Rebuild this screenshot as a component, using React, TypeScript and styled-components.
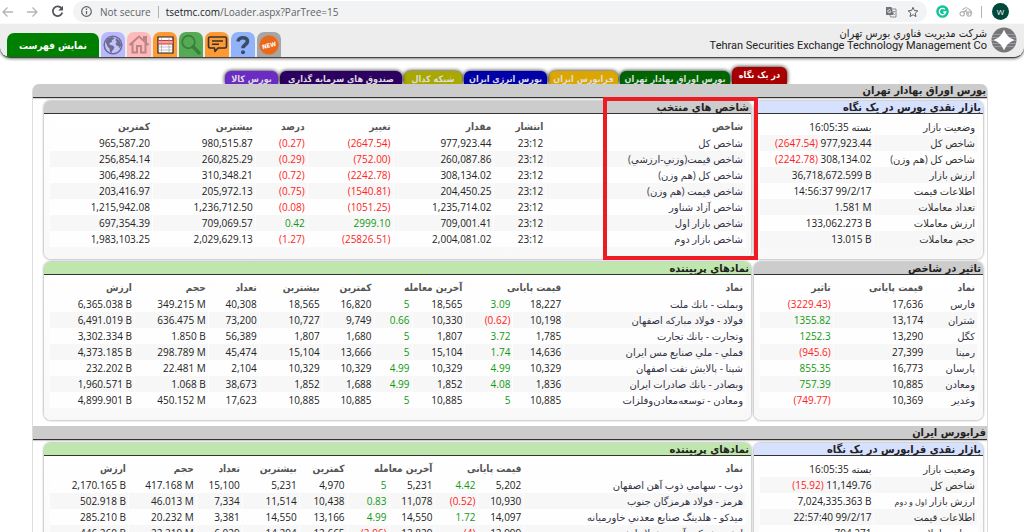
import React from "react";
import styled, { createGlobalStyle, css } from "styled-components";

const headingFont = `"DejaVu Sans Condensed", "DejaVu Sans", sans-serif`;
const textFont = `"Open Sans", "DejaVu Sans", sans-serif`;

const GlobalStyle = createGlobalStyle`
  *, *::before, *::after { box-sizing: border-box; }
  body {
    margin: 0;
    background: #fff;
    color: #222;
    font-family: ${headingFont};
    font-size: 10px;
  }
`;

const Window = styled.div`
  display: flex;
  flex-direction: column;
  height: 100vh;
  overflow: hidden;
`;

/* ---------- browser bar ---------- */

const BrowserBar = styled.div`
  display: flex;
  flex: none;
  align-items: center;
  gap: 8px;
  height: 25px;
  padding: 0 15px 2px 0;
  background: #fff;
  font-family: "Open Sans", "Noto Sans", sans-serif;
  font-size: 10px;
`;

const NavButtons = styled.div`
  display: flex;
  gap: 10px;
  width: 65px;
`;

const IconButton = styled.button`
  display: flex;
  align-items: center;
  justify-content: center;
  flex: none;
  width: 15px;
  height: 16px;
  padding: 0;
  border: 0;
  background: none;
  color: #5f6368;
`;

const Address = styled.div`
  display: flex;
  flex: 1;
  align-items: center;
  gap: 7px;
  height: 21px;
  padding: 0 7px;
  border-radius: 11px;
  background: #f1f3f4;
`;

const Insecure = styled.span`
  color: #5f6368;
`;

const Divider = styled.span`
  flex: none;
  width: 1px;
  height: 12px;
  background: #b0b3b6;
`;

const Url = styled.span`
  flex: 1;
  color: #5f6368;
  b { color: #202124; font-weight: 400; }
`;

const Avatar = styled.button`
  flex: none;
  width: 17px;
  height: 17px;
  margin-left: 2px;
  padding: 0;
  border: 0;
  border-radius: 50%;
  background: #00483c;
  color: #fff;
  font-family: inherit;
  font-size: 8px;
  line-height: 17px;
`;

/* ---------- site header ---------- */

const SiteHeader = styled.header`
  display: flex;
  flex: none;
  align-items: flex-end;
  height: 33px;
  padding: 0 7px;
  border-bottom: 1px solid #444;
  border-radius: 0 0 10px 10px;
  background: #ededed;
  box-shadow: 0 1px 3px rgba(0, 0, 0, 0.5);
`;

const MenuButton = styled.button`
  width: 92px;
  height: 24px;
  padding: 0;
  border: 0;
  border-radius: 7px 7px 0 0;
  background: #008000;
  color: #fff;
  font-family: inherit;
  font-size: 10px;
  font-weight: 700;
`;

const Shortcuts = styled.nav`
  display: flex;
  gap: 2px;
  padding-left: 2px;
`;

const Shortcut = styled.a<{ $color: string }>`
  display: flex;
  align-items: center;
  justify-content: center;
  width: 24px;
  height: 25px;
  border-radius: 7px 7px 0 0;
  background: ${(p) => p.$color};
`;

const Brand = styled.div`
  display: flex;
  flex: 1;
  align-items: center;
  justify-content: flex-end;
  gap: 4px;
  height: 100%;
  padding-bottom: 3px;
`;

const BrandText = styled.div`
  text-align: right;
  font-size: 11px;
  line-height: 12px;
  color: #222;
`;

const BrandLatin = styled.div`
  font-family: Roboto, sans-serif;
`;

/* ---------- section tabs ---------- */

const Tabs = styled.nav`
  display: flex;
  flex: none;
  direction: rtl;
  align-items: flex-end;
  gap: 2px;
  height: 26px;
  padding-right: 237px;
  overflow: hidden;
`;

const Tab = styled.a<{ $color: string; $width: number; $active?: boolean }>`
  flex: none;
  width: ${(p) => p.$width}px;
  height: 13px;
  overflow: hidden;
  border-radius: 6px 6px 0 0;
  background: ${(p) => p.$color};
  box-shadow: 0 0 4px #000;
  color: #ddd;
  font-size: 9px;
  font-weight: 700;
  line-height: 16px;
  text-align: center;
  text-decoration: none;
  white-space: nowrap;
  ${(p) =>
    p.$active &&
    css`
      height: 17px;
      color: #fff;
    `}
`;

/* ---------- panels ---------- */

const Board = styled.main`
  direction: rtl;
  flex: none;
  margin: 0 36px 0 32px;
  border: solid #ddd;
  border-width: 0 1px;
  border-radius: 7px 7px 0 0;
`;

const BoardTitle = styled.h1`
  height: 14px;
  margin: 0;
  padding: 0 1px;
  border-bottom: 1px solid #333;
  background: #ccc;
  box-shadow: 0 1px 1px #ccc;
  font-size: 11px;
  line-height: 14px;
  &:first-child { border-radius: 6px 6px 0 0; }
`;

const Grid = styled.div`
  display: grid;
  grid-template-columns: minmax(0, 229fr) minmax(0, 707fr);
  gap: 3px;
  padding: 3px 4px 6px 11px;
`;

const Panel = styled.section`
  position: relative;
  display: flex;
  flex-direction: column;
  border-radius: 7px;
  background: #fff;
  box-shadow: 0 0 2px 1px #c4c4c4;
`;

const PanelTitle = styled.h2<{ $color: string }>`
  height: 13px;
  margin: 0;
  padding: 0 2px;
  border-bottom: 1px solid #333;
  border-radius: 6px 6px 0 0;
  background: ${(p) => p.$color};
  font-size: 11px;
  line-height: 14px;
`;

const PanelBody = styled.div`
  flex: 1;
  padding: 5px 5px 12px;
  border-radius: 0 0 7px 7px;
  background: linear-gradient(#fff, #f8f8f8);
`;

const Highlight = styled.div`
  position: absolute;
  z-index: 1;
  top: -4px;
  right: -7px;
  bottom: -1px;
  width: 155px;
  border: 4px solid #ed1c24;
  pointer-events: none;
`;

const Table = styled.table`
  width: 100%;
  table-layout: fixed;
  border-collapse: collapse;
  line-height: 14px;
  white-space: nowrap;
  td, th {
    height: 16px;
    padding: 0 2px;
    border: solid #fdfdfd;
    border-width: 0 1px;
    text-align: right;
  }
  thead th { color: #555; }
  tbody { font-family: ${textFont}; }
  tbody th { font-weight: 400; color: #333; }
  tbody td { direction: ltr; }
  tbody tr { background: #fefefe; }
  tbody tr:nth-child(even) { background: #f7f7f7; }
`;

const Column = styled.col<{ $share: number }>`
  width: ${(p) => p.$share}%;
`;

const Amount = styled.span<{ $down?: boolean }>`
  color: ${(p) => (p.$down ? "#f22" : "#191")};
`;

const SymbolLink = styled.a`
  color: #334;
  text-decoration: none;
`;

const Small = styled.small`
  font-size: 8px;
`;

/* ---------- data ---------- */

type Heading = { text: string; span?: number };

const indexHeads: Heading[] = ["شاخص", "انتشار", "مقدار", "تغییر", "درصد", "بیشترین", "کمترین"].map((text) => ({ text }));
const indexRows = [
  ["شاخص کل", "23:12", "977,923.44", "(2647.54)", "(0.27)", "980,515.87", "965,587.20"],
  ["شاخص قيمت(وزني-ارزشي)", "23:12", "260,087.86", "(752.00)", "(0.29)", "260,825.29", "256,854.14"],
  ["شاخص کل (هم وزن)", "23:12", "308,134.02", "(2242.78)", "(0.72)", "310,348.21", "306,498.22"],
  ["شاخص قیمت (هم وزن)", "23:12", "204,450.25", "(1540.81)", "(0.75)", "205,972.13", "203,416.97"],
  ["شاخص آزاد شناور", "23:12", "1,235,714.02", "(1051.25)", "(0.08)", "1,236,712.50", "1,215,942.08"],
  ["شاخص بازار اول", "23:12", "709,001.41", "2999.10", "0.42", "709,069.57", "697,354.39"],
  ["شاخص بازار دوم", "23:12", "2,004,081.02", "(25826.51)", "(1.27)", "2,029,629.13", "1,983,103.25"],
];

const impactHeads: Heading[] = ["نماد", "قیمت پایانی", "تاثیر"].map((text) => ({ text }));
const impactRows = [
  ["فارس", "17,636", "(3229.43)"],
  ["شتران", "13,174", "1355.82"],
  ["کگل", "13,290", "1252.3"],
  ["رمپنا", "27,399", "(945.6)"],
  ["پارسان", "16,773", "855.35"],
  ["ومعادن", "10,885", "757.39"],
  ["وغدير", "10,369", "(749.77)"],
];

const symbolHeads: Heading[] = [
  { text: "نماد" },
  { text: "قیمت پایانی", span: 2 },
  { text: "آخرین معامله", span: 2 },
  { text: "کمترین" },
  { text: "بیشترین" },
  { text: "تعداد" },
  { text: "حجم" },
  { text: "ارزش" },
];
const bourseRows = [
  ["وبملت - بانك ملت", "18,227", "3.09", "18,565", "5", "16,820", "18,565", "40,308", "349.215 M", "6,365.038 B"],
  ["فولاد - فولاد مباركه اصفهان", "10,198", "(0.62)", "10,330", "0.66", "9,749", "10,727", "73,200", "636.475 M", "6,491.019 B"],
  ["وتجارت - بانك تجارت", "1,785", "3.72", "1,807", "5", "1,680", "1,807", "56,389", "1.850 B", "3,302.334 B"],
  ["فملي - ملي صنايع مس ايران", "14,636", "1.74", "15,104", "5", "13,666", "15,104", "45,474", "298.789 M", "4,373.185 B"],
  ["شپنا - پالايش نفت اصفهان", "10,329", "4.99", "10,329", "4.99", "10,329", "10,329", "2,104", "22.481 M", "232.202 B"],
  ["وبصادر - بانك صادرات ايران", "1,836", "4.08", "1,852", "4.99", "1,688", "1,852", "38,673", "1.068 B", "1,960.571 B"],
  ["ومعادن - توسعه‌معادن‌وفلزات", "10,885", "5", "10,885", "5", "10,885", "10,885", "17,623", "450.152 M", "4,899.901 B"],
];
const otcRows = [
  ["ذوب - سهامي ذوب آهن اصفهان", "5,202", "4.42", "5,231", "5", "4,970", "5,231", "15,100", "417.168 M", "2,170.165 B"],
  ["هرمز - فولاد هرمزگان جنوب", "10,930", "(0.52)", "11,078", "0.83", "10,438", "11,514", "7,334", "46.013 M", "502.918 B"],
  ["ميدكو - هلدينگ صنايع معدني خاورميانه", "14,097", "1.72", "14,550", "4.99", "13,166", "14,550", "3,381", "20.232 M", "285.210 B"],
  ["ارفع - شركت آهن و فولاد ارفع", "12,999", "(4)", "12,829", "(2.96)", "12,665", "14,294", "6,029", "22.219 M", "446.260 B"],
];

const tabs = [
  { text: "در یک نگاه", color: "#a80000", width: 55, active: true },
  { text: "بورس اوراق بهادار تهران", color: "#006400", width: 110 },
  { text: "فرابورس ایران", color: "#dca600", width: 69 },
  { text: "بورس انرژی ایران", color: "#0000a8", width: 83 },
  { text: "شبکه کدال", color: "#a8a800", width: 58 },
  { text: "صندوق های سرمایه گذاری", color: "#2c0060", width: 122 },
  { text: "بورس کالا", color: "#6a2cc4", width: 53 },
];

/* ---------- icons ---------- */

const GlobeIcon = () => (
  <svg width="20" height="20" viewBox="0 0 20 20">
    <circle cx="10" cy="10" r="8.8" fill="#c4c4fa" stroke="#6c6c94" strokeWidth="1.500" />
    <path d="M2.500 6.500 5 3.500 9 2 11.500 3 10.500 4.500 8.500 5 9.500 6.500 7.500 7.500 6 9 7.500 10 9.500 10.500 11.500 12 10.500 14.500 9 16 8.500 18 7 17 6.500 13.500 4.500 11.500 3.500 9ZM13 3 16.500 5.500 18.200 9 17.500 12 16 13 15.500 11 13.500 10.500 12.500 8.500 14 7 12.500 5.500Z" fill="#6c6c94" />
  </svg>
);
const HomeIcon = () => (
  <svg width="22" height="21" viewBox="0 0 22 21">
    <path d="M1.500 11 11 2.500 20.500 11M4.500 9V18.500H9V12H13V18.500H17.500V9M16 6V3H18V8" fill="none" stroke="#b98585" strokeWidth="2" />
  </svg>
);
const SheetIcon = () => (
  <svg width="17" height="18" viewBox="0 0 17 18">
    <path d="M1 1H16V17H1Z" fill="#fff" stroke="#222" strokeWidth="1.200" />
    <path d="M1.600 4.500H15.400V8H1.600Z" fill="#f3a4a0" />
    <path d="M1 4.500H16M1 8H16" stroke="#d33" />
    <path d="M1 11H16M1 14H16M4.500 1V17M12 1V17" stroke="#999" strokeWidth=".6" />
  </svg>
);
const SearchIcon = () => (
  <svg width="22" height="22" viewBox="0 0 22 22">
    <circle cx="8.500" cy="8" r="6.300" fill="#55aa55" stroke="#3a803a" strokeWidth="1.700" />
    <path d="M13 12.500 19 19" stroke="#3a803a" strokeWidth="3.500" strokeLinecap="round" />
  </svg>
);
const ChatIcon = () => (
  <svg width="21" height="19" viewBox="0 0 21 19">
    <path d="M3 2H18Q19.500 2 19.500 3.500V11.500Q19.500 13 18 13H11L8 16.500 7.500 13H3Q1.500 13 1.500 11.500V3.500Q1.500 2 3 2Z" fill="none" stroke="#333" strokeWidth="1.600" strokeLinejoin="round" />
    <path d="M5 6H16M5 9.200H12" stroke="#333" strokeWidth="1.500" />
  </svg>
);
const HelpIcon = () => (
  <svg width="16" height="20" viewBox="0 0 16 20">
    <path d="M3.200 6.500C3.200 1.500 12.500 1.500 12.500 6.300 12.500 9.500 8 9.500 8 13.300" fill="none" stroke="#3c4a66" strokeWidth="3.600" />
    <circle cx="8" cy="17.200" r="2" fill="#3c4a66" />
  </svg>
);
const NewIcon = () => (
  <svg width="22" height="22" viewBox="0 0 22 22">
    <circle cx="11" cy="11" r="9.500" fill="#e8691b" stroke="#f4762a" strokeDasharray="1.500 1" />
    <text x="11" y="13.500" textAnchor="middle" fontSize="6" fontWeight="700" fill="#fff" transform="rotate(-14 11 11)">NEW</text>
  </svg>
);
const LogoIcon = () => (
  <svg width="26" height="26" viewBox="0 0 26 26">
    <circle cx="13" cy="13" r="12.500" fill="#77777b" />
    <path d="M2 7.500H24M1 10.500H25M1 13.500H25M1 16.500H25M2 19.500H24" stroke="#a4a4a7" strokeWidth=".8" />
    <path d="M13 4.500Q15.500 10.500 21.500 13 15.500 15.500 13 21.500 10.500 15.500 4.500 13 10.500 10.500 13 4.500Z" fill="#fff" stroke="#fff" strokeWidth="1.600" />
  </svg>
);

const shortcuts = [
  { label: "جهان", color: "#b9b9ff", icon: <GlobeIcon /> },
  { label: "خانه", color: "#ffb9b9", icon: <HomeIcon /> },
  { label: "دیده بان", color: "#ff9933", icon: <SheetIcon /> },
  { label: "جستجو", color: "#55aa55", icon: <SearchIcon /> },
  { label: "پیام", color: "#ff9933", icon: <ChatIcon /> },
  { label: "راهنما", color: "#90b3fb", icon: <HelpIcon /> },
  { label: "جدید", color: "#a6a6a6", icon: <NewIcon /> },
];

/* ---------- pieces ---------- */

function Columns({ widths }: { widths: number[] }) {
  const total = widths.reduce((sum, w) => sum + w, 0);
  return (
    <colgroup>
      {widths.map((w, i) => <Column key={i} $share={(w / total) * 100} />)}
    </colgroup>
  );
}

type DataTableProps = {
  widths: number[];
  heads: Heading[];
  rows: string[][];
  signed: number[];
};

function DataTable({ widths, heads, rows, signed }: DataTableProps) {
  return (
    <Table>
      <Columns widths={widths} />
      <thead>
        <tr>
          {heads.map((h) => <th key={h.text} scope="col" colSpan={h.span}>{h.text}</th>)}
        </tr>
      </thead>
      <tbody>
        {rows.map(([name, ...cells]) => (
          <tr key={name}>
            <th scope="row"><SymbolLink href="#">{name}</SymbolLink></th>
            {cells.map((cell, i) => (
              <td key={i}>
                {signed.includes(i) ? <Amount $down={cell.startsWith("(")}>{cell}</Amount> : cell}
              </td>
            ))}
          </tr>
        ))}
      </tbody>
    </Table>
  );
}

function FactTable({ rows }: { rows: [React.ReactNode, React.ReactNode][] }) {
  return (
    <Table>
      <Columns widths={[104, 115]} />
      <tbody>
        {rows.map(([label, value], i) => (
          <tr key={i}>
            <th scope="row">{label}</th>
            <td>{value}</td>
          </tr>
        ))}
      </tbody>
    </Table>
  );
}

const Status = () => <span dir="rtl">بسته 16:05:35</span>;

export default function App() {
  return (
    <Window>
      <GlobalStyle />
      <BrowserBar>
        <NavButtons>
          <IconButton aria-label="Back">
            <svg width="13" height="12" viewBox="0 0 13 12"><path d="M12 6H2M6.500 1.500 2 6 6.500 10.500" fill="none" stroke="#b4b6b9" strokeWidth="1.400" /></svg>
          </IconButton>
          <IconButton aria-label="Forward">
            <svg width="13" height="12" viewBox="0 0 13 12"><path d="M1 6H11M6.500 1.500 11 6 6.500 10.500" fill="none" stroke="#b4b6b9" strokeWidth="1.400" /></svg>
          </IconButton>
          <IconButton aria-label="Reload">
            <svg width="13" height="13" viewBox="0 0 13 13"><path d="M10.500 3.300A4.800 4.800 0 1 0 11.300 7.500" fill="none" stroke="#505357" strokeWidth="1.700" /><path d="M12 .8V5.600H7.200Z" fill="#505357" /></svg>
          </IconButton>
        </NavButtons>
        <Address>
          <svg width="13" height="13" viewBox="0 0 13 13"><circle cx="6.500" cy="6.500" r="4.800" fill="none" stroke="#5f6368" strokeWidth="1.200" /><path d="M6.500 6V9.200M6.500 3.600V4.900" stroke="#5f6368" strokeWidth="1.300" /></svg>
          <Insecure>Not secure</Insecure>
          <Divider />
          <Url><b>tsetmc.com</b>/Loader.aspx?ParTree=15</Url>
          <IconButton aria-label="Translate">
            <svg width="12" height="12" viewBox="0 0 12 12"><path d="M1 1H6.500L8.500 9H1Z" fill="#70757a" /><path d="M7 3H11V11H5.500L5 9" fill="none" stroke="#8a8d91" /><path d="M5.600 4.400A1.500 1.500 0 1 0 5.700 5.700H4.500" fill="none" stroke="#fff" strokeWidth=".8" /><path d="M7.500 5.500H10.500M9 5Q9 8 7.500 9M8 7 10 9" fill="none" stroke="#8a8d91" strokeWidth=".7" /></svg>
          </IconButton>
          <IconButton aria-label="Bookmark">
            <svg width="12" height="12" viewBox="0 0 12 12"><path d="M6 1.300 7.400 4.500 10.900 4.800 8.200 7.100 9 10.600 6 8.700 3 10.600 3.800 7.100 1.100 4.800 4.600 4.500Z" fill="none" stroke="#5f6368" /></svg>
          </IconButton>
        </Address>
        <IconButton aria-label="Grammar check">
          <svg width="13" height="13" viewBox="0 0 13 13"><circle cx="6.500" cy="6.500" r="6.300" fill="#15c39a" /><path d="M8.800 4.300A3.200 3.200 0 1 0 9.700 7H7.300" fill="none" stroke="#fff" strokeWidth="1.300" /></svg>
        </IconButton>
        <IconButton aria-label="Extension">
          <svg width="14" height="12" viewBox="0 0 14 12"><circle cx="3.200" cy="7.800" r="2.200" fill="none" stroke="#b2b2b2" strokeWidth="1.200" /><circle cx="10" cy="8" r="2.200" fill="none" stroke="#b2b2b2" strokeWidth="1.200" /><path d="M3.500 3.800Q6.500 0 10 3.200Q12.500 4.500 12.800 8M4.800 6 8 3.500M6 4.500 10 8.500" fill="none" stroke="#b2b2b2" strokeWidth="1.100" /></svg>
        </IconButton>
        <Divider />
        <Avatar aria-label="Profile">W</Avatar>
      </BrowserBar>

      <SiteHeader>
        <MenuButton>نمایش فهرست</MenuButton>
        <Shortcuts>
          {shortcuts.map((s) => (
            <Shortcut key={s.label} href="#" aria-label={s.label} $color={s.color}>{s.icon}</Shortcut>
          ))}
        </Shortcuts>
        <Brand>
          <BrandText>
            <div dir="rtl">شرکت مدیریت فناوري بورس تهران</div>
            <BrandLatin>Tehran Securities Exchange Technology Management Co</BrandLatin>
          </BrandText>
          <LogoIcon />
        </Brand>
      </SiteHeader>

      <Tabs>
        {tabs.map((t) => (
          <Tab key={t.text} href="#" $color={t.color} $width={t.width} $active={t.active}>{t.text}</Tab>
        ))}
      </Tabs>

      <Board>
        <BoardTitle>بورس اوراق بهادار تهران</BoardTitle>
        <Grid>
          <Panel>
            <PanelTitle $color="#d6e0ff">بازار نقدی بورس در یک نگاه</PanelTitle>
            <PanelBody>
              <FactTable
                rows={[
                  ["وضعیت بازار", <Status />],
                  ["شاخص کل", <><Amount $down>(2647.54)</Amount> 977,923.44</>],
                  ["شاخص كل (هم وزن)", <><Amount $down>(2242.78)</Amount> 308,134.02</>],
                  ["ارزش بازار", "36,718,672.599 B"],
                  ["اطلاعات قیمت", "14:56:37 99/2/17"],
                  ["تعداد معاملات", "1.581 M"],
                  ["ارزش معاملات", "133,062.273 B"],
                  ["حجم معاملات", "13.015 B"],
                ]}
              />
            </PanelBody>
          </Panel>
          <Panel>
            <PanelTitle $color="#ccc">شاخص های منتخب</PanelTitle>
            <PanelBody>
              <DataTable widths={[200, 52, 101, 86, 52, 103, 103]} heads={indexHeads} rows={indexRows} signed={[2, 3]} />
            </PanelBody>
            <Highlight />
          </Panel>
          <Panel>
            <PanelTitle $color="#ccc">تاثیر در شاخص</PanelTitle>
            <PanelBody>
              <DataTable widths={[52, 93, 74]} heads={impactHeads} rows={impactRows} signed={[1]} />
            </PanelBody>
          </Panel>
          <Panel>
            <PanelTitle $color="#bfe6ac">نمادهای پربیننده</PanelTitle>
            <PanelBody>
              <DataTable widths={[182, 51, 48, 53, 38, 52, 63, 51, 74, 85]} heads={symbolHeads} rows={bourseRows} signed={[1, 3]} />
            </PanelBody>
          </Panel>
        </Grid>

        <BoardTitle>فرابورس ایران</BoardTitle>
        <Grid>
          <Panel>
            <PanelTitle $color="#d6e0ff">بازار نقدی فرابورس در یک نگاه</PanelTitle>
            <PanelBody>
              <FactTable
                rows={[
                  ["وضعیت بازار", <Status />],
                  ["شاخص کل", <><Amount $down>(15.92)</Amount> 11,149.76</>],
                  [<>ارزش بازار <Small>اول و دوم</Small></>, "7,024,335.363 B"],
                  ["اطلاعات قیمت", "22:57:40 99/2/17"],
                  ["تعداد معاملات", "704,271"],
                ]}
              />
            </PanelBody>
          </Panel>
          <Panel>
            <PanelTitle $color="#bfe6ac">نمادهای پربیننده</PanelTitle>
            <PanelBody>
              <DataTable widths={[222, 46, 43, 46, 42, 48, 57, 46, 68, 79]} heads={symbolHeads} rows={otcRows} signed={[1, 3]} />
            </PanelBody>
          </Panel>
        </Grid>
      </Board>
    </Window>
  );
}
